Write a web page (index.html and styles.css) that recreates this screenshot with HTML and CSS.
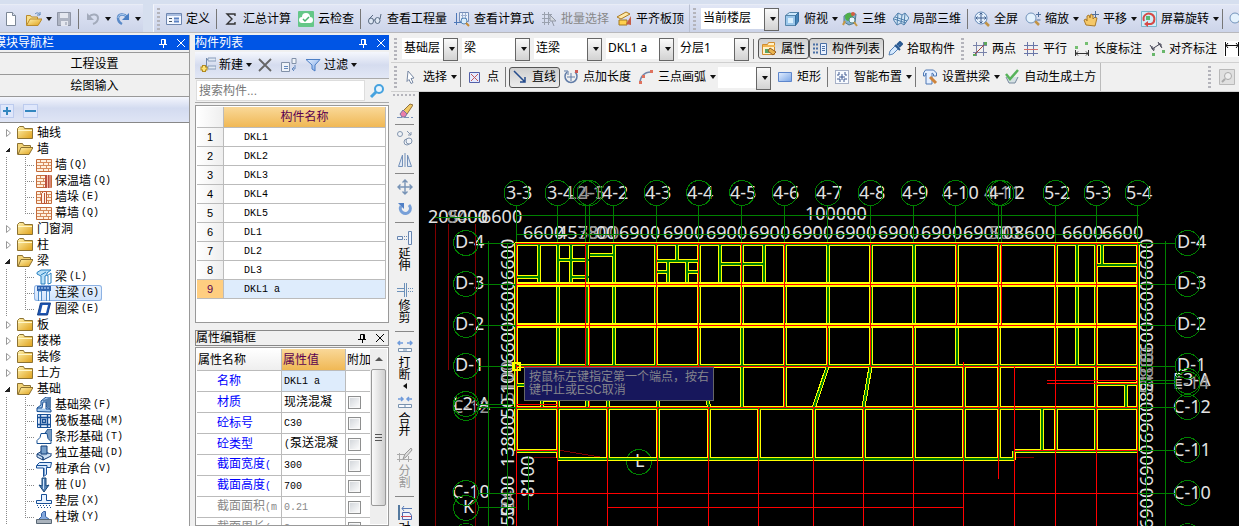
FILE: index.html
```html
<!DOCTYPE html>
<html lang="zh-CN">
<head>
<meta charset="utf-8">
<title>绘图输入</title>
<link rel="stylesheet" href="styles.css">
</head>
<body>
<svg class="defs" aria-hidden="true">
  <defs>
    <linearGradient id="gold" x1="0" y1="0" x2="1" y2="1"><stop offset="0" stop-color="#fff3b0"/><stop offset="1" stop-color="#dfa018"/></linearGradient>
    <linearGradient id="blue" x1="0" y1="0" x2="1" y2="1"><stop offset="0" stop-color="#e4efff"/><stop offset="1" stop-color="#78a4e6"/></linearGradient>
  </defs>
  <symbol id="doc" viewBox="0 0 16 16"><path d="M3.5 1.500h6l3 3v10h-9z" fill="#fff" stroke="#7c8796"/><path d="M9.500 1.500v3h3" fill="#dde5f0" stroke="#7c8796"/></symbol>
  <symbol id="open" viewBox="0 0 16 16"><path d="M.5 14V4.500h4l1 1.500h6v3" fill="#f8df8a" stroke="#b98a2c"/><path d="M.5 14.500 4 8h12l-4 6.500z" fill="url(#gold)" stroke="#b98a2c"/><path d="M9 3c2-2 4-1 5 1m0-3v3h-3" fill="none" stroke="#5c86b8"/></symbol>
  <symbol id="save" viewBox="0 0 16 16"><path d="M1.500 1.500h13v13h-13z" fill="#aeb4c2" stroke="#8e95a5"/><path d="M4 2h8v5H4zM5 10h7v5H5z" fill="#e4e7ef"/><path d="M10 11v3" stroke="#8e95a5"/></symbol>
  <symbol id="undo" viewBox="0 0 16 16"><path d="M4 6c3-4 9-3 9 1 0 3-2 5-5 6" fill="none" stroke="#a3abbb" stroke-width="2"/><path d="M2 2v7h7z" fill="#a3abbb"/></symbol>
  <symbol id="redo" viewBox="0 0 16 16"><path d="M12 6C9 2 3 3 3 7c0 3 2 5 4 6" fill="none" stroke="#5a8ac8" stroke-width="2.500"/><path d="M12 6C9 2 3 3 3 7" fill="none" stroke="#b2d1f3"/><path d="M14 2v7H7z" fill="#4a7fc4"/></symbol>
  <symbol id="define" viewBox="0 0 16 16"><path d="M.5 2.500h15v11H.5z" fill="#f3f7ff" stroke="#6e86b0"/><path d="M1 3h14v2H1z" fill="#a9bddf"/><path d="M3 7.500h3m-3 3h3" stroke="#456"/><path d="M8 7.500h5m-5 3h5" stroke="#5c83c5" stroke-width="2"/></symbol>
  <symbol id="sigma" viewBox="0 0 16 16"><path d="M12 5V3H4l5 5-5 5h8v-2" fill="none" stroke="#333" stroke-width="1.400"/></symbol>
  <symbol id="cloud" viewBox="0 0 16 16"><rect width="16" height="16" rx="1" fill="#65c788"/><path d="M4 12a3 3 0 0 1 0-6 4 4 0 0 1 8 0 3 3 0 0 1 0 6z" fill="#fff"/><path d="m5 8 2 2 4-4" fill="none" stroke="#48b46e" stroke-width="1.500"/></symbol>
  <symbol id="glasses" viewBox="0 0 16 16"><g fill="#dfe8f4" stroke="#596b83"><ellipse cx="4" cy="10" rx="2.500" ry="3"/><ellipse cx="10.500" cy="9.500" rx="2.500" ry="3"/><path d="M6.500 9h1.500M2 8l4-4M13 8l1-5" fill="none"/></g></symbol>
  <symbol id="formula" viewBox="0 0 16 16"><path d="M5.500 1.500h9v9h-9z" fill="#eaf1fb" stroke="#7790ba"/><path d="M7 4.500h6m-6 3h6M8.500 2v8m3-8v8" stroke="#9db0d0"/><path d="M2.500 2v12M0 11.500h7" stroke="#4d78b8"/><circle cx="10" cy="10" r="3" fill="#d9ecfb" stroke="#5586b6"/><path d="m12 12 3 3" stroke="#c68b35" stroke-width="2"/></symbol>
  <symbol id="batch" viewBox="0 0 16 16"><path d="M1 3.500h10M1 7.500h8M1 11.500h8M3.500 1v13M7.500 1v13" stroke="#9aa1ae"/><path d="m9 4 6 6H9z" fill="#d5d9e0" stroke="#9198a5"/><path d="m11 10 2 5" stroke="#9198a5"/></symbol>
  <symbol id="slab" viewBox="0 0 16 16"><path d="m1 6 9-5 4 2-9 5z" fill="#ffe9a6" stroke="#ad7b20"/><path d="M3 9h8v5H3z" fill="#ffd04e" stroke="#a37821"/><path d="m10 13 5-8v9z" fill="#c65d45"/></symbol>
  <symbol id="cube" viewBox="0 0 16 16"><path d="m1.500 4.500 4-3h9l-3 3z" fill="#cce8fc" stroke="#5685aa"/><path d="M1.500 4.500h10v10h-10z" fill="#9bc7eb" stroke="#5685aa"/><path d="m11.500 4.500 3-3v9l-3 4z" fill="#4584b7" stroke="#356c9d"/><path d="M4 7h5v5H4z" fill="#d9effd"/></symbol>
  <symbol id="orbit" viewBox="0 0 16 16"><path d="m2 5 5-3 7 1-1 9-6 2-5-3z" fill="#7eaed0" stroke="#567b8d"/><circle cx="7" cy="6" r="4" fill="#4faf48"/><circle cx="10" cy="9" r="3" fill="#e7f7fb" stroke="#57868d"/><path d="m12 11 3 4M3 10l-2 4" stroke="#c69943" stroke-width="2"/><circle cx="11" cy="3" r="2" fill="#d45d40"/></symbol>
  <symbol id="part3d" viewBox="0 0 16 16"><path d="m0 8 5-6 4 2 3-2 4 5-5 7-3-2-4 2z" fill="#d2e6f6" stroke="#5281ad"/><path d="m5 2-1 12M9 4 8 12m4-10-1 12M2 6l12 4M1 8l12 4" fill="none" stroke="#5281ad"/></symbol>
  <symbol id="full" viewBox="0 0 16 16"><path d="m11 11 4 4" stroke="#c29344" stroke-width="2.500"/><circle cx="7" cy="7" r="6" fill="#e4f0fd" stroke="#6286b4"/><path d="M7 2v10M2 7h10M5.500 3.500 7 2l1.500 1.500M5.500 10.500 7 12l1.500-1.500M3.500 5.500 2 7l1.500 1.500M10.500 5.500 12 7l-1.500 1.500" fill="none" stroke="#405f8e"/></symbol>
  <symbol id="zoomer" viewBox="0 0 16 16"><path d="m10 10 4 4" stroke="#c29344" stroke-width="2.500"/><circle cx="6" cy="7" r="5" fill="#e4f2fd" stroke="#7394bb"/><path d="M11 3.500h5M13.500 1v5m-2 3h4" stroke="#51719d"/></symbol>
  <symbol id="hand" viewBox="0 0 16 16"><path d="M3 14 1 9l2-1 1 2V5l2-1 1 3 1-4 2 1v4l2-2 2 1-2 8z" fill="#f5c868" stroke="#aa7a2a"/><path d="M12.500 0v7M9 3.500h7" stroke="#52709a"/></symbol>
  <symbol id="spin" viewBox="0 0 16 16"><path d="M.5.5h15v15H.5z" fill="#cfeef8" stroke="#79b6cd"/><path d="M3 10c-2-5 3-9 7-7 5 2 4 9 0 10H5" fill="none" stroke="#d64a47" stroke-width="2"/><path d="m7 10-4 3 4 3z" fill="#d64a47"/><path d="M5 5h4v4H5z" fill="#5bb773"/></symbol>
  <symbol id="props" viewBox="0 0 16 16"><path d="M1.500 3.500h5l1-2h6v12h-12z" fill="#fff1c8" stroke="#cf8d30"/><path d="M2 4h12v2H2z" fill="#f3b64f"/><path d="M4 8h7v4H4z" fill="#5aa766"/><path d="m9 7 6 4-3 3-5-4z" fill="#eab44f" stroke="#955f25"/></symbol>
  <symbol id="list" viewBox="0 0 16 16"><path d="M8.500 2.500h6v11h-6z" fill="#e8f1ff" stroke="#496fa5"/><path d="M10 5.500h3m-3 2h3m-3 2h3" stroke="#496fa5"/><path d="M1 3.500h2m1 0h2m-5 4h2m1 0h2m-5 4h2m1 0h2" stroke="#496fa5" stroke-width="2"/></symbol>
  <symbol id="pick" viewBox="0 0 16 16"><path d="m2 14 1-4 6-6 3 3-6 6z" fill="#d6eaff" stroke="#5783b7"/><path d="m8 4 5 5m-3-5 3-3 2 2-3 3" fill="#467bb8" stroke="#28588f" stroke-width="2"/></symbol>
  <symbol id="two" viewBox="0 0 16 16"><path d="M4.500 1v14m7-14v14M1 4.500h14M1 11.500h14" stroke="#7882aa"/><path d="m2 14 12-12" stroke="#a5443d"/><path d="M1 13h3v2H1zm11-12h3v3h-3z" fill="#5da75b"/></symbol>
  <symbol id="para" viewBox="0 0 16 16"><path d="M4.500 1v14m6-14v14M1 4.500h14" stroke="#6976a8"/><path d="M1 8.500h14" stroke="#d76b65"/><path d="M1 12.500h14" stroke="#6976a8"/></symbol>
  <symbol id="len" viewBox="0 0 16 16"><path d="M1.500 9v6m13-6v6M2 12.500h12M4 10.500l-2 2 2 2m8-4 2 2-2 2" fill="none" stroke="#333"/><path d="M1 5h3v3H1zm10-4h3v3h-3z" fill="#75bf71"/></symbol>
  <symbol id="align" viewBox="0 0 16 16"><path d="m1 4 4 6m4-9 4 6M3 8l8-5M3 5v3h3m3-5h3v3" fill="none" stroke="#445"/><path d="M3 12h3v3H3zm10-3h3v3h-3z" fill="#69b76b"/></symbol>
  <symbol id="dim" viewBox="0 0 16 16"><path fill="#fff" d="M0 0h16v16H0z"/><path d="M1.500 1v14m13-14v14M2 4.500h12M4 2 2 4.500 4 7m8-5 2 2.500L12 7" fill="none" stroke="#111"/></symbol>
  <symbol id="arrow" viewBox="0 0 16 16"><path d="m5 2 6 7-3 .5 2 4-2 1-2-4-2 2z" fill="#fff" stroke="#7788a4"/></symbol>
  <symbol id="point" viewBox="0 0 16 16"><path d="M2.500 3.500h10v10h-10z" fill="#e5eaff" stroke="#5360a8"/><path d="m4 5 7 7m0-7-7 7" stroke="#c35959"/></symbol>
  <symbol id="line" viewBox="0 0 16 16"><path d="m2 2 11 11M13 8v5H8" fill="none" stroke="#244b8c" stroke-width="1.500"/></symbol>
  <symbol id="addlen" viewBox="0 0 16 16"><path d="M4 3a6 6 0 1 0 8 0" fill="none" stroke="#617ca7" stroke-width="1.500"/><path d="M8 4v8M4 8h8M1 2h4v4" fill="none" stroke="#617ca7"/><path d="M12 1h3v3h-3z" fill="#cd5b55"/></symbol>
  <symbol id="arc" viewBox="0 0 16 16"><path d="M2 14C2 8 6 3 13 3" fill="none" stroke="#7387a9" stroke-width="1.500"/><path d="M1 12h3v3H1zm3-6h3v3H4zm8-5h3v3h-3z" fill="#df725e"/></symbol>
  <symbol id="rect" viewBox="0 0 16 16"><path d="M1.500 3.500h13v9h-13z" fill="url(#blue)" stroke="#5d86cc"/></symbol>
  <symbol id="smart" viewBox="0 0 16 16"><path d="M1.500 1.500h13v13h-13z" fill="#f8fbff" stroke="#5a6d96" stroke-dasharray="1 1"/><path d="M5 3v3H3m8-3v3h2M3 10h3v3m7-3h-3v3M8 5v6M5 8h6" fill="none" stroke="#405b91"/></symbol>
  <symbol id="arch" viewBox="0 0 16 16"><path d="M1.500 7V4l2-3h8l3 3v3h-3V5L10 4v11H4V4L3 7z" fill="#e4efff" stroke="#4e79b5"/><path d="m8 8 6 6" stroke="#ce843c" stroke-width="3"/></symbol>
  <symbol id="earth" viewBox="0 0 16 16"><path d="m2 8 3 6h6l3-6" fill="#d5e0e3" stroke="#75889c"/><path d="m2 5 4 5 8-9" fill="none" stroke="#58b35b" stroke-width="2.500"/></symbol>
  <symbol id="find" viewBox="0 0 16 16"><path d="M.5.5h15v15H.5z" fill="#e0e0e0" stroke="#b9b9b9"/><circle cx="9" cy="7" r="3.500" fill="#eee" stroke="#aaa"/><path d="m6 10-3 3" stroke="#aaa" stroke-width="2"/></symbol>
  <symbol id="new" viewBox="0 0 16 16"><path d="M6.500 1v11M7 2.500h9M7 10.500h9" stroke="#7189ad"/><path d="M8 1h8v3H8zm0 8h8v3H8z" fill="#e2eaf5" stroke="#889cba"/><path d="M4 8v7M.5 11.500h7" stroke="#b18a21" stroke-width="4"/><path d="M4 9v5M1.500 11.500h5" stroke="#ffe477" stroke-width="2"/></symbol>
  <symbol id="del" viewBox="0 0 16 16"><path d="m2 2 12 12M14 2 2 14" stroke="#666" stroke-width="1.800"/></symbol>
  <symbol id="copy" viewBox="0 0 16 16"><path d="M.5 5.500h8v9h-8zM11 1.500h4v5h-4z" fill="#eef2f8" stroke="#8291a8"/><path d="M3 9.500h4m-4 2h4M14 8v4h-3m2-2-2 2 2 2" fill="none" stroke="#6488bc"/></symbol>
  <symbol id="filter" viewBox="0 0 16 16"><path d="M1 2.500h14L10 8v6l-3-2V8z" fill="url(#blue)" stroke="#4d7fc5"/></symbol>
  <symbol id="search" viewBox="0 0 16 16"><circle cx="10" cy="6" r="4" fill="#e7f5ff" stroke="#46a2df" stroke-width="2"/><path d="m7 9-5 5" stroke="#46a2df" stroke-width="3"/></symbol>
  <symbol id="pin" viewBox="0 0 10 10"><path d="M3.500 6V1.500h4V6M6.500 1v5M1 6.500h8M5.500 7v3" fill="none" stroke="currentColor"/></symbol>
  <symbol id="close" viewBox="0 0 10 10"><path d="m1 1 8 8m0-8L1 9" stroke="currentColor"/></symbol>
  <symbol id="twist" viewBox="0 0 8 8"><path d="M1.500.500v7L5.500 4z" fill="#fff" stroke="#999"/></symbol>
  <symbol id="folder" viewBox="0 0 16 16"><path d="M.5 13.500v-10l2-2h4l1 2h8v10z" fill="url(#gold)" stroke="#8c7232"/><path d="M1 5.500h14" stroke="#fff6c8"/></symbol>
  <symbol id="folder-open" viewBox="0 0 16 16"><path d="M.5 13.500v-11h5l1 2h7v3" fill="#f3d478" stroke="#8c7232"/><path d="m1 13.500 3-7h12l-4 7z" fill="url(#gold)" stroke="#8c7232"/></symbol>
  <symbol id="brick" viewBox="0 0 16 16"><path d="M.5 2.500h15v12H.5z" fill="#fff0df" stroke="#c36b3a"/><path d="M1 5.500h14M1 8.500h14M1 11.500h14M4.500 3v2m6-2v2m-3 1v2m5-2v2m-8 1v2m6-2v2m-3 1v2m5-2v2" stroke="#d58a5c"/></symbol>
  <symbol id="warm" viewBox="0 0 16 16"><use href="#brick"/><path d="M9 2h6v13H9z" fill="#b94f42"/><path d="M11.500 2v13M14 2v13" stroke="#f5c1a9"/></symbol>
  <symbol id="pier" viewBox="0 0 16 16"><use href="#brick"/><path d="m5.500 4.500 2-2h3v12h-5zM8.500 4v10" fill="#fff1e6" stroke="#bd5733"/></symbol>
  <symbol id="beam" viewBox="0 0 16 16"><path d="M1 3.500 5 1h10l-4 3v2l-2 1v8H5V7L1 5z" fill="#b9e0f7" stroke="#267fc0"/><path d="m5 6 5-3m1 4 4-3v10l-3 1V7" fill="none" stroke="#267fc0"/></symbol>
  <symbol id="link" viewBox="0 0 16 16"><path d="M1 1h14v5H1z" fill="#2d61ae"/><path d="M2 3h12" stroke="#cee5ff" stroke-dasharray="2 1"/><path d="M2.500 6h3v10h-3zm8 0h3v10h-3z" fill="#eaf5ff" stroke="#4e8bca"/></symbol>
  <symbol id="ring" viewBox="0 0 16 16"><path d="M4.500 2h10l-3 12h-10z" fill="#1d55b2" stroke="#123f8a"/><path d="M6.500 4h5.500l-2 8H4.500z" fill="#fff"/></symbol>
  <symbol id="fbeam" viewBox="0 0 16 16"><path d="M1 14.500V11l4-3V4l5-4h5l-5 5v4l5 4v2z" fill="#a9cdf0" stroke="#164d91"/><path d="M5 4h5v5l5 3V0z" fill="#557fae"/><path d="M1 11h5l1-6h3v7h4" fill="#fff" stroke="#164d91"/></symbol>
  <symbol id="raft" viewBox="0 0 16 16"><path d="M1.500 1.500h13v13h-13z" fill="#e1ecfb" stroke="#174f96"/><path d="M4.500 1v14m7-14v14M1 4.500h14M1 11.500h14M6.500 6.500h3v3h-3z" fill="none" stroke="#174f96" stroke-width="1.400"/></symbol>
  <symbol id="strip" viewBox="0 0 16 16"><path d="M9 4 12 0h4v11l-3 3z" fill="#799abf" stroke="#174f91"/><path d="M1 14.500v-3l3-3 1-4h6l1 5 3 3v2z" fill="#fff" stroke="#174f91"/></symbol>
  <symbol id="isolated" viewBox="0 0 16 16"><path d="m1 9 5-3 9 3-8 6z" fill="#b6cde6" stroke="#153f78"/><path d="M5 1h6v8H5z" fill="#779fca" stroke="#153f78"/><path d="M1 9v3l6 3v-3zM7 12v3l8-4V8" fill="#d2e2f4" stroke="#153f78"/></symbol>
  <symbol id="cap" viewBox="0 0 16 16"><path d="m.5 4.500 3-3h12l-1 5h-4v7l-3 2V7h-7z" fill="#dcecff" stroke="#174f96"/><path d="M1 4.500h10v2M8 7v7" fill="none" stroke="#174f96"/></symbol>
  <symbol id="pile" viewBox="0 0 16 16"><path d="M6 1h4v8l3-1-5 7-5-7 3 1z" fill="#5682b4" stroke="#174778"/><path d="M7.500 2v10" stroke="#d1e8ff"/></symbol>
  <symbol id="cushion" viewBox="0 0 16 16"><path d="M5.500 1.500h5v6h5v3H.5v-3h5z" fill="#e9f3ff" stroke="#174f96"/><path d="M1 12.500h14M2 14.500h13" stroke="#174f96" stroke-dasharray="1 2"/></symbol>
  <symbol id="block" viewBox="0 0 16 16"><path d="M5.500 7.500v-3l2-2h2v5l4 3H2.500z" fill="#83a7db" stroke="#345fa4"/><path d="M.5 10.500h15v4H.5z" fill="#aab3bd" stroke="#596774"/></symbol>
  <symbol id="erase" viewBox="0 0 16 16"><path d="m6 8 7-7 3 1-6 9z" fill="#f1ca66" stroke="#91713c"/><path d="m3 11 3-4 4 4-2 3H5z" fill="#e97eaa" stroke="#74739e"/><path d="M0 14.500h16" stroke="#7992b8" stroke-dasharray="5 2"/></symbol>
  <symbol id="clone" viewBox="0 0 16 16"><g fill="#f1f4f8" stroke="#8395ae"><circle cx="3" cy="4" r="2.500"/><circle cx="10" cy="12" r="3"/><circle cx="12" cy="11" r="3"/><path d="m10 1 4 4m0-3v3h-3" fill="none"/></g></symbol>
  <symbol id="mirror" viewBox="0 0 16 16"><path d="M1.500 14.500h4V3zM10.500 3v11.500h4zM8 1v14" fill="#e1eaf6" stroke="#7390b9"/></symbol>
  <symbol id="move" viewBox="0 0 16 16"><path d="M8 1v14M1 8h14M5.500 3.500 8 1l2.500 2.500m-5 9L8 15l2.500-2.500m-7-7L1 8l2.500 2.500m9-5L15 8l-2.500 2.500" fill="none" stroke="#7793b6" stroke-width="1.400"/></symbol>
  <symbol id="rotate" viewBox="0 0 16 16"><path d="M4 5a5 5 0 1 0 8-1" fill="none" stroke="#78a0d8" stroke-width="3"/><path d="M1 2h6v6z" fill="#507fc5"/></symbol>
  <symbol id="extend" viewBox="0 0 16 16"><path d="M11.500 1.500h3v13h-3zM.5 6.500h5v3h-5z" fill="#edf4ff" stroke="#6785af"/><path d="M7 6.500h4M7 9.500h4" stroke="#6785af" stroke-dasharray="1 1"/></symbol>
  <symbol id="trim" viewBox="0 0 16 16"><path d="M7.500 1v14m2-14v14M0 6.500h7M0 9.500h7" stroke="#6d91b9"/><path d="M11 6.500h5m-5 3h5" stroke="#6d91b9" stroke-dasharray="1 1"/></symbol>
  <symbol id="break" viewBox="0 0 16 16"><path d="M6 4H1m2-2L1 4l2 2m7-2h5m-2-2 2 2-2 2" fill="none" stroke="#6f9bdb" stroke-width="1.500"/><path d="M1.500 9.500h13v3h-13zM7 9v4m2-4v4" fill="#f7faff" stroke="#7992ae"/></symbol>
  <symbol id="merge" viewBox="0 0 16 16"><path d="M1 4h5M4 2l2 2-2 2m11-2h-5m2-2-2 2 2 2" fill="none" stroke="#6f9bdb" stroke-width="1.500"/><path d="M1.500 9.500h13v3h-13zM8 9v4" fill="#f7faff" stroke="#7992ae"/></symbol>
  <symbol id="split" viewBox="0 0 16 16"><path d="M2.500 6v9m9-6v6M0 7.500h8M0 12.500h15" stroke="#aaa"/><path d="m6 12 2-5 6-6 1 2-6 7z" fill="#ddd" stroke="#999"/></symbol>
  <symbol id="snap" viewBox="0 0 16 16"><path d="M2 1v15" stroke="#54799f" stroke-width="2"/><path d="M5 4.500h10M7 2 5 4.500 7 7" fill="none" stroke="#587bb5"/><path d="M5.500 8.500h7l2 3v4h-9z" fill="#eef3ff" stroke="#4d65ad"/><path d="M4 12.500h10" stroke="#c84d5b"/></symbol>
</svg>

<header class="topbar">
  <div class="group file-group">
    <button class="tb"><svg><use href="#doc"/></svg></button>
    <button class="tb drop"><svg><use href="#open"/></svg></button>
    <button class="tb"><svg><use href="#save"/></svg></button>
    <i class="sep"></i>
    <button class="tb drop"><svg><use href="#undo"/></svg></button>
    <button class="tb drop"><svg><use href="#redo"/></svg></button>
  </div>
  <div class="group calc-group">
    <i class="grip snug"></i>
    <button class="tb"><svg><use href="#define"/></svg>定义</button><i class="sep"></i>
    <button class="tb"><svg><use href="#sigma"/></svg>汇总计算</button>
    <button class="tb"><svg><use href="#cloud"/></svg>云检查</button><i class="sep"></i>
    <button class="tb"><svg><use href="#glasses"/></svg>查看工程量</button>
    <button class="tb"><svg><use href="#formula"/></svg>查看计算式</button>
    <button class="tb" disabled><svg><use href="#batch"/></svg>批量选择</button>
    <button class="tb"><svg><use href="#slab"/></svg>平齐板顶</button>
  </div>
  <div class="group view-group">
    <i class="grip"></i>
    <span class="combo wide"><select aria-label="楼层范围"><option>当前楼层</option></select></span>
    <button class="tb drop"><svg><use href="#cube"/></svg>俯视</button>
    <button class="tb"><svg><use href="#orbit"/></svg>三维</button>
    <button class="tb"><svg><use href="#part3d"/></svg>局部三维</button><i class="sep"></i>
    <button class="tb"><svg><use href="#full"/></svg>全屏</button>
    <button class="tb drop"><svg><use href="#zoomer"/></svg>缩放</button>
    <button class="tb drop"><svg><use href="#hand"/></svg>平移</button>
    <button class="tb drop"><svg><use href="#spin"/></svg>屏幕旋转</button><i class="sep"></i>
    <button class="tb"><svg><use href="#zoomer"/></svg></button>
  </div>
</header>

<div class="workspace">
  <nav class="navigator">
    <h2 class="caption clipped"><span>模块导航栏</span><svg><use href="#pin"/></svg><svg><use href="#close"/></svg></h2>
    <button class="section">工程设置</button>
    <button class="section">绘图输入</button>
    <div class="expand-bar"><button class="expand plus" aria-label="展开"></button><button class="expand" aria-label="折叠"></button></div>
    <ul class="tree">
      <li><b class="node"><svg class="twist"><use href="#twist"/></svg><svg><use href="#folder"/></svg>轴线</b></li>
      <li><b class="node opened"><svg><use href="#folder-open"/></svg>墙</b>
        <ul>
          <li><span class="leaf"><svg><use href="#brick"/></svg>墙<code>(Q)</code></span></li>
          <li><span class="leaf"><svg><use href="#warm"/></svg>保温墙<code>(Q)</code></span></li>
          <li><span class="leaf"><svg><use href="#pier"/></svg>墙垛<code>(E)</code></span></li>
          <li><span class="leaf"><svg><use href="#brick"/></svg>幕墙<code>(Q)</code></span></li>
        </ul></li>
      <li><b class="node"><svg class="twist"><use href="#twist"/></svg><svg><use href="#folder"/></svg>门窗洞</b></li>
      <li><b class="node"><svg class="twist"><use href="#twist"/></svg><svg><use href="#folder"/></svg>柱</b></li>
      <li><b class="node opened"><svg><use href="#folder-open"/></svg>梁</b>
        <ul>
          <li><span class="leaf"><svg><use href="#beam"/></svg>梁<code>(L)</code></span></li>
          <li><span class="leaf current"><svg><use href="#link"/></svg>连梁<code>(G)</code></span></li>
          <li><span class="leaf"><svg><use href="#ring"/></svg>圈梁<code>(E)</code></span></li>
        </ul></li>
      <li><b class="node"><svg class="twist"><use href="#twist"/></svg><svg><use href="#folder"/></svg>板</b></li>
      <li><b class="node"><svg class="twist"><use href="#twist"/></svg><svg><use href="#folder"/></svg>楼梯</b></li>
      <li><b class="node"><svg class="twist"><use href="#twist"/></svg><svg><use href="#folder"/></svg>装修</b></li>
      <li><b class="node"><svg class="twist"><use href="#twist"/></svg><svg><use href="#folder"/></svg>土方</b></li>
      <li><b class="node opened"><svg><use href="#folder-open"/></svg>基础</b>
        <ul>
          <li><span class="leaf"><svg><use href="#fbeam"/></svg>基础梁<code>(F)</code></span></li>
          <li><span class="leaf"><svg><use href="#raft"/></svg>筏板基础<code>(M)</code></span></li>
          <li><span class="leaf"><svg><use href="#strip"/></svg>条形基础<code>(T)</code></span></li>
          <li><span class="leaf"><svg><use href="#isolated"/></svg>独立基础<code>(D)</code></span></li>
          <li><span class="leaf"><svg><use href="#cap"/></svg>桩承台<code>(V)</code></span></li>
          <li><span class="leaf"><svg><use href="#pile"/></svg>桩<code>(U)</code></span></li>
          <li><span class="leaf"><svg><use href="#cushion"/></svg>垫层<code>(X)</code></span></li>
          <li><span class="leaf"><svg><use href="#block"/></svg>柱墩<code>(Y)</code></span></li>
        </ul></li>
    </ul>
  </nav>

  <aside class="panels">
    <h2 class="caption"><span>构件列表</span><svg><use href="#pin"/></svg><svg><use href="#close"/></svg></h2>
    <div class="list-tools">
      <button class="tb drop"><svg><use href="#new"/></svg>新建</button>
      <button class="tb"><svg><use href="#del"/></svg></button>
      <button class="tb"><svg><use href="#copy"/></svg></button>
      <button class="tb drop"><svg><use href="#filter"/></svg>过滤</button>
    </div>
    <div class="search"><input type="text" placeholder="搜索构件..." aria-label="搜索构件"><button aria-label="搜索"><svg><use href="#search"/></svg></button></div>
    <div class="frame list-frame">
      <table class="parts">
        <thead><tr><th></th><th>构件名称</th></tr></thead>
        <tbody>
          <tr><th>1</th><td>DKL1</td></tr><tr><th>2</th><td>DKL2</td></tr><tr><th>3</th><td>DKL3</td></tr>
          <tr><th>4</th><td>DKL4</td></tr><tr><th>5</th><td>DKL5</td></tr><tr><th>6</th><td>DL1</td></tr>
          <tr><th>7</th><td>DL2</td></tr><tr><th>8</th><td>DL3</td></tr><tr class="picked"><th>9</th><td>DKL1 a</td></tr>
        </tbody>
      </table>
    </div>
    <h2 class="caption plain"><span>属性编辑框</span><svg><use href="#pin"/></svg><svg><use href="#close"/></svg></h2>
    <div class="frame prop-frame">
      <table class="props">
        <thead><tr><th>属性名称</th><th class="hot">属性值</th><th>附加</th></tr></thead>
        <tbody>
          <tr><th>名称</th><td class="lit"><code>DKL1 a</code></td><td></td></tr>
          <tr><th>材质</th><td>现浇混凝</td><td><input type="checkbox" aria-label="附加材质"></td></tr>
          <tr><th>砼标号</th><td><code>C30</code></td><td><input type="checkbox" aria-label="附加砼标号"></td></tr>
          <tr><th>砼类型</th><td><code>(</code>泵送混凝</td><td><input type="checkbox" aria-label="附加砼类型"></td></tr>
          <tr><th>截面宽度<code>(</code></th><td><code>300</code></td><td><input type="checkbox" aria-label="附加截面宽度"></td></tr>
          <tr><th>截面高度<code>(</code></th><td><code>700</code></td><td><input type="checkbox" aria-label="附加截面高度"></td></tr>
          <tr class="off"><th>截面面积<code>(m</code></th><td><code>0.21</code></td><td><input type="checkbox" aria-label="附加截面面积"></td></tr>
          <tr class="off"><th>截面周长<code>(m</code></th><td><code>2</code></td><td><input type="checkbox" aria-label="附加截面周长"></td></tr>
        </tbody>
      </table>
      <div class="scroll"><i class="up"></i><i class="thumb"></i></div>
    </div>
  </aside>

  <main class="stage">
    <div class="bar">
      <i class="grip"></i>
      <div class="combos">
        <span class="combo short"><select aria-label="楼层"><option>基础层</option></select></span>
        <span class="combo"><select aria-label="构件大类"><option>梁</option></select></span>
        <span class="combo"><select aria-label="构件类型"><option>连梁</option></select></span>
        <span class="combo"><select aria-label="构件"><option>DKL1 a</option></select></span>
        <span class="combo layer"><select aria-label="分层"><option>分层1</option></select></span>
      </div>
      <i class="sep"></i>
      <button class="tb pressed"><svg><use href="#props"/></svg>属性</button>
      <button class="tb pressed"><svg><use href="#list"/></svg>构件列表</button>
      <button class="tb"><svg><use href="#pick"/></svg>拾取构件</button>
      <i class="grip edge"></i>
      <button class="tb"><svg><use href="#two"/></svg>两点</button>
      <button class="tb"><svg><use href="#para"/></svg>平行</button>
      <button class="tb"><svg><use href="#len"/></svg>长度标注</button>
      <button class="tb"><svg><use href="#align"/></svg>对齐标注</button>
      <button class="tb"><svg><use href="#dim"/></svg></button>
    </div>
    <div class="bar">
      <div class="group draw-group">
        <i class="grip snug"></i>
        <button class="tb drop"><svg><use href="#arrow"/></svg>选择</button><i class="sep"></i>
        <button class="tb"><svg><use href="#point"/></svg>点</button><i class="sep"></i>
        <button class="tb pressed"><svg><use href="#line"/></svg>直线</button>
        <button class="tb"><svg><use href="#addlen"/></svg>点加长度</button>
        <button class="tb drop"><svg><use href="#arc"/></svg>三点画弧</button>
        <span class="combo radius"><select aria-label="半径"><option></option></select></span>
        <button class="tb"><svg><use href="#rect"/></svg>矩形</button><i class="sep"></i>
        <button class="tb drop"><svg><use href="#smart"/></svg>智能布置</button><i class="sep"></i>
        <button class="tb drop"><svg><use href="#arch"/></svg>设置拱梁</button>
        <button class="tb"><svg><use href="#earth"/></svg>自动生成土方</button>
      </div>
      <div class="group last"><i class="grip"></i><button class="tb"><svg><use href="#find"/></svg></button></div>
    </div>
    <div class="drawing">
      <div class="edit-tools">
        <i class="grip-h"></i>
        <button class="vt"><svg><use href="#erase"/></svg></button><hr>
        <button class="vt"><svg><use href="#clone"/></svg></button>
        <button class="vt"><svg><use href="#mirror"/></svg></button><hr>
        <button class="vt"><svg><use href="#move"/></svg></button>
        <button class="vt"><svg><use href="#rotate"/></svg></button><hr>
        <button class="vt long"><svg><use href="#extend"/></svg><span>延伸</span></button>
        <button class="vt long"><svg><use href="#trim"/></svg><span>修剪</span></button><hr>
        <button class="vt long more"><svg><use href="#break"/></svg><span>打断</span></button>
        <button class="vt long"><svg><use href="#merge"/></svg><span>合并</span></button>
        <button class="vt long" disabled><svg><use href="#split"/></svg><span>分割</span></button><hr>
        <button class="vt long"><svg><use href="#snap"/></svg><span>对齐</span></button>
      </div>
      <div class="canvas">
        <svg class="plan" viewBox="419 92 820 434" preserveAspectRatio="xMinYMin slice">
          <defs>
            <path id="walls" d="M515 244H1140M514 285H1138M514 326H1138M516 366H1138M514 408H1138M516 451H558M557 459H1015M1014 451H1138M1014 451V460
              M516 243V451M558 243V458M587 243V407M614 243V366M656 243V366M699 243V366M742 243V407M785 243V407M828 243V366M871 243V366M914 243V366M957 243V366M999 243V458M1056 243V366M1077 243V366M1096 243V450M1138 243V451
              M539 243V284M516 277H538M571 243V284M557 260H589M570 277H589M590 255H613M677 243V261M656 261H698M668 261V284M656 272H668M687 261V284M687 272H698M720 243V284M764 243V284M720 264H764M1102 243V265M1096 265H1137
              M827.500 367 814 407M870.500 367 863.500 407M914 366V458M964 366V458M542 398V407M541 400H558M516 385H540M608 397V458M658 399V458M707 397 709 407V458M759 407V458M814 407V458M864 407V458M1042 407V450M1056 407V450M1096 384H1137M1126 383V407"/>
            <path id="heads" d="M516.500 205V243M557.500 205V243M585.500 205V243M589.500 205V243M613.500 205V243M656.500 205V243M698.500 205V243M741.500 205V243M784.500 205V243M827.500 205V243M870.500 205V243M913.500 205V243M955.500 205V243M998.500 205V243M1001.500 205V243M1055.500 205V243M1096.500 205V243M1137.500 205V243M435 217.500H482M516 215.500H1139M516 234.500H1139M507.500 243V526M488.500 241V526M1146.500 243V526M1165.500 241V526M478 243.500H516M478 284.500H516M478 325.500H516M478 366.500H516M478 404.500H516M478 407.500H516M478 493.500H516M478 507.500H516M1138 243.500H1175M1138 284.500H1175M1138 325.500H1175M1138 366.500H1175M1138 380.500H1175M1138 383.500H1175M1138 407.500H1175M1138 450.500H1175M1138 493.500H1175M528.500 456V510"/>
          </defs>
          <g class="bright">
            <text x="506" y="199">3-3</text><text x="547" y="199">3-4</text><text class="dim" x="567" y="199">L2-1</text><text class="dim" x="579" y="199">4-5</text><text x="602" y="199">4-2</text><text x="645" y="199">4-3</text><text x="687" y="199">4-4</text><text x="730" y="199">4-5</text><text x="773" y="199">4-6</text><text x="816" y="199">4-7</text><text x="859" y="199">4-8</text><text x="902" y="199">4-9</text><text x="942" y="199">4-10</text><text class="dim" x="984" y="199">4-11</text><text x="988" y="199">4-12</text><text x="1044" y="199">5-2</text><text x="1085" y="199">5-3</text><text x="1126" y="199">5-4</text>
            <text x="805" y="220">100000</text>
            <text x="428" y="223">205</text><text class="dim" x="447" y="223">8400</text><text x="457" y="223">000</text><text x="481" y="223">6600</text>
            <text x="523" y="239">6600</text><text x="557" y="239">4578</text><text class="dim" x="578" y="239">3800</text><text x="596" y="239">00</text><text x="619" y="239">6900</text><text x="663" y="239">6900</text><text x="706" y="239">6900</text><text x="749" y="239">6900</text><text x="792" y="239">6900</text><text x="835" y="239">6900</text><text x="878" y="239">6900</text><text x="921" y="239">6900</text><text x="963" y="239">6900</text><text class="dim" x="989" y="239">500</text><text x="1003" y="239">0</text><text x="1014" y="239">8600</text><text x="1062" y="239">6600</text><text x="1102" y="239">6600</text>
            <text x="455" y="248">D-4</text><text x="455" y="289">D-3</text><text x="455" y="330">D-2</text><text x="455" y="371">D-1</text><text x="453" y="410">L2-A</text><text class="dim" x="452" y="413">C-12</text><text x="452" y="498">C-10</text><text x="463" y="513">K</text><text x="635" y="467">L</text>
            <text x="1177" y="248">D-4</text><text x="1177" y="289">D-3</text><text x="1177" y="330">D-2</text><text x="1177" y="371">D-1</text><text x="1173" y="386">E3-A</text><text class="dim" x="1173" y="389">E-14</text><text x="1173" y="413">C-12</text><text x="1173" y="456">C-11</text><text x="1173" y="499">C-10</text>
            <text transform="translate(514 280) rotate(-90)">6600</text><text transform="translate(514 322) rotate(-90)">6600</text><text transform="translate(514 363) rotate(-90)">6600</text><text transform="translate(514 394) rotate(-90)">100</text><text class="dim" transform="translate(514 402) rotate(-90)">5100</text><text transform="translate(514 418) rotate(-90)">50</text><text transform="translate(514 467) rotate(-90)">13800</text><text transform="translate(514 517) rotate(-90)">5000</text><text class="dim" transform="translate(514 511) rotate(-90)">24</text><text transform="translate(514 536) rotate(-90)">650</text><text transform="translate(534 497) rotate(-90)">8100</text>
            <text transform="translate(1153 280) rotate(-90)">6600</text><text transform="translate(1153 322) rotate(-90)">6600</text><text transform="translate(1153 363) rotate(-90)">6600</text><text class="dim" transform="translate(1153 388) rotate(-90)">3800</text><text class="dim" transform="translate(1153 394) rotate(-90)">5100</text><text transform="translate(1153 402) rotate(-90)">88</text><text transform="translate(1153 443) rotate(-90)">6900</text><text transform="translate(1153 486) rotate(-90)">6900</text><text transform="translate(1153 529) rotate(-90)">6900</text>
          </g>
          <g class="maroon"><path d="M435.500 224V526M448.500 224V370M475.500 224V526M534 457.500H607M558 450 600 457M1014 457.500H1034"/></g>
          <use class="green-line" href="#heads"/>
          <g class="bubbles">
            <circle cx="516.500" cy="193" r="12.500"/><circle cx="557.500" cy="193" r="12.500"/><circle cx="585.500" cy="193" r="12.500"/><circle cx="589.500" cy="193" r="12.500"/><circle cx="613.500" cy="193" r="12.500"/><circle cx="656.500" cy="193" r="12.500"/><circle cx="699" cy="193" r="12.500"/><circle cx="742" cy="193" r="12.500"/><circle cx="784.500" cy="193" r="12.500"/><circle cx="827.500" cy="193" r="12.500"/><circle cx="870.500" cy="193" r="12.500"/><circle cx="913.500" cy="193" r="12.500"/><circle cx="955.500" cy="193" r="12.500"/><circle cx="998.500" cy="193" r="12.500"/><circle cx="1001.500" cy="193" r="12.500"/><circle cx="1055.500" cy="193" r="12.500"/><circle cx="1096.500" cy="193" r="12.500"/><circle cx="1137.500" cy="193" r="12.500"/>
            <circle cx="466" cy="243" r="12.500"/><circle cx="466" cy="284" r="12.500"/><circle cx="466" cy="325" r="12.500"/><circle cx="466" cy="366" r="12.500"/><circle cx="466" cy="404" r="12.500"/><circle cx="466" cy="408" r="12.500"/><circle cx="466" cy="493" r="12.500"/><circle cx="466" cy="508" r="12.500"/><circle cx="466" cy="536" r="12.500"/><circle cx="639" cy="462" r="12.500"/>
            <circle cx="1187.500" cy="243" r="12.500"/><circle cx="1187.500" cy="284" r="12.500"/><circle cx="1187.500" cy="325" r="12.500"/><circle cx="1187.500" cy="366" r="12.500"/><circle cx="1187.500" cy="381" r="12.500"/><circle cx="1187.500" cy="384" r="12.500"/><circle cx="1187.500" cy="407" r="12.500"/><circle cx="1187.500" cy="450" r="12.500"/><circle cx="1187.500" cy="493" r="12.500"/><circle cx="1187.500" cy="536" r="12.500"/>
          </g>
          <use class="wall-face" href="#walls"/>
          <use class="wall-core" href="#walls"/>
          <path class="slab-edge" d="M516 283H1137M516 286H1137M516 324H1137M516 327H1137M1096 383H1137"/>
          <path class="axis" d="M516 243.500H1137M516 284.500H1137M516 325.500H1137M516 366.500H1137M516 407.500H1137M516 404.500H557M516 450.500H557M1014 450.500H1137M516 493.500H1137M607 507.500H964M1047 380.500H1137M1047 383.500H1137
            M516.500 243V526M557.500 366V526M585.500 243V366M589.500 284V407M656.500 243V366M698.500 243V366M741.500 243V325M784.500 243V407M827.500 325V366M870.500 243V366M913.500 325V526M956.500 243V325M998.500 243V479M1001.500 243V326M1055.500 243V526M1096.500 243V526M1137.500 243V526M607.500 407V526M657.500 407V526M708.500 407V526M758.500 407V526M813.500 407V526M863.500 407V526M963.500 362V526M1014.500 366V526"/>
          <rect class="cursor" x="513" y="363" width="7" height="7"/>
        </svg>
        <div class="hint" role="tooltip">按鼠标左键指定第一个端点，按右键中止或ESC取消</div>
      </div>
    </div>
  </main>
</div>
</body>
</html>
```
FILE: styles.css
```css
* { box-sizing: border-box; }
body {
  margin: 0;
  height: 100vh;
  display: flex;
  flex-direction: column;
  overflow: hidden;
  background: #f0f0f0;
  color: #000;
  font: 12px/16px "Liberation Sans", "Noto Sans CJK SC", sans-serif;
}
button, input, select { font: inherit; color: inherit; margin: 0; }
button { border: 0; padding: 0; background: none; }
svg { width: 16px; height: 16px; flex: none; }
.defs { position: absolute; width: 0; height: 0; }
code { font: 10px/16px "Liberation Mono", monospace; white-space: pre; }

/* toolbars */
.topbar { display: flex; flex: none; height: 33px; padding-top: 4px; background: #d6dfef; border-bottom: 1px solid #b8b8bc; }
.group { display: flex; align-items: center; flex: none; }
.topbar .group { background: linear-gradient(#e1e6f5, #ccd4e9); border-top: 1px solid #e8ecf6; }
.file-group { width: 143px; }
.calc-group { width: 537px; margin-left: 10px; border-left: 1px solid #f4f6fb; border-right: 1px solid #b9c0d2; }
.topbar .view-group { flex: 1; overflow: hidden; }
.tb { display: flex; align-items: center; flex: none; gap: 4px; height: 20px; padding: 0 4px 0 3px; white-space: nowrap; }
.tb:disabled { color: #888; }
.drop { padding-right: 1px; }
.drop::after, .combo::after { content: ""; border: 3px solid transparent; border-top: 4px solid #111; border-bottom: 0; }
.sep { flex: none; width: 1px; height: 20px; margin: 0 3px 0 2px; background: #777; }
.grip { flex: none; width: 3px; height: 22px; margin: 0 5px 0 3px; background: repeating-linear-gradient(#b4b4bb 0 2px, transparent 2px 4px); }
.snug { margin-right: 3px; }
.pressed { height: 21px; padding: 0 3px 0 2px; border: 1px solid #555; border-radius: 3px; background: linear-gradient(#cfcfcf, #ececec); }
.bar { display: flex; align-items: center; flex: none; height: 29px; overflow: hidden; border-bottom: 1px solid #d0d0d0; }
.bar > .sep { margin: 0 4px; }
.edge { margin-left: 2px; }
.combos { display: flex; gap: 4px; }
.combo { position: relative; display: flex; flex: none; width: 68px; height: 21px; background: #fff; }
.short { width: 56px; }
.layer { width: 71px; }
.wide { width: 78px; margin-right: 2px; }
.radius { width: 53px; margin: 0 3px 0 1px; }
.combo select { width: 100%; border: 0; padding: 0 14px 1px 2px; background: none; appearance: none; outline: 0; font-family: "Noto Sans", "Noto Sans CJK SC", sans-serif; }
.combo::before { content: ""; position: absolute; right: 0; top: 0; width: 13px; height: 21px; border: 1px solid #666; background: linear-gradient(#fafafa, #d2d2d2); pointer-events: none; }
.combo::after { position: absolute; right: 3px; top: 9px; pointer-events: none; }
.draw-group { height: 28px; border-right: 1px solid #bbb; }
.last { margin-left: auto; }

/* docked panels */
.workspace { display: flex; flex: 1; min-height: 0; padding-top: 2px; }
.navigator { display: flex; flex-direction: column; flex: none; width: 190px; margin-right: 5px; border-right: 1px solid #999; }
.caption { display: flex; align-items: center; flex: none; gap: 8px; height: 15px; margin: 0 0 2px; padding-right: 3px; background: #0055e5; color: #fff; font-size: 12px; font-weight: 400; white-space: nowrap; }
.caption span { flex: 1; }
.caption svg { width: 10px; height: 10px; }
.clipped span { text-indent: -6px; overflow: hidden; }
.plain { height: 16px; margin-bottom: 1px; border: 1px solid #888; background: #f0f0f0; color: #000; }
.section { flex: none; height: 22px; border: solid #999; border-width: 1px 0 0; background: #f0f0f0; }
.expand-bar { display: flex; gap: 9px; flex: none; height: 27px; padding: 7px 0 0; border-top: 1px solid #999; border-bottom: 1px solid #888; background: linear-gradient(#f4f6fd, #d3dbf0 45%, #dfe5f5); }
.expand { width: 15px; height: 14px; border: 1px solid #bccbee; background: linear-gradient(#3387bf, #3387bf) center / 11px 2px no-repeat #dfe7fb; }
.expand.plus { width: 14px; background: linear-gradient(#3387bf, #3387bf) center / 8px 2px no-repeat, linear-gradient(#3387bf, #3387bf) center / 2px 8px no-repeat #dfe7fb; }
.tree, .tree ul { list-style: none; margin: 0; padding: 0; }
.tree { flex: 1; overflow: hidden; padding-top: 2px; background: #fff; }
.node { display: flex; gap: 4px; height: 16px; padding-left: 5px; align-items: center; font-weight: 400; }
.node .twist { width: 8px; height: 8px; }
.opened::before { content: ""; width: 5px; height: 5px; margin-right: 3px; background: linear-gradient(135deg, transparent 50%, #222 50%); }
.tree ul { padding-left: 25px; background: repeating-linear-gradient(#888 0 1px, transparent 1px 2px) 6px 0 / 1px 100% no-repeat; }
.tree ul li { display: flex; align-items: center; height: 16px; background: repeating-linear-gradient(#888 0 1px, transparent 1px 2px) 0 0 / 1px 100% no-repeat, repeating-linear-gradient(90deg, #888 0 1px, transparent 1px 2px) 0 8px / 10px 1px no-repeat; }
.tree ul li:last-child { background-size: 1px 8px, 10px 1px; }
.leaf { display: flex; align-items: center; gap: 3px; height: 16px; margin-left: 9px; padding: 0 3px 0 2px; border-radius: 3px; }
.leaf code { margin-left: -1px; }
.current { box-shadow: inset 0 0 0 1px #8db2e3; background: linear-gradient(#eaf3ff, #cfe2fb); }

.panels { display: flex; flex-direction: column; flex: none; width: 194px; margin-right: 2px; }
.list-tools { display: flex; align-items: center; flex: none; gap: 1px; height: 26px; padding-left: 2px; background: linear-gradient(#f5f7fd, #d5dcef 50%, #e2e7f5); }
.list-tools .tb { gap: 3px; }
.search { display: flex; flex: none; height: 25px; padding: 1px 0 1px 1px; margin-bottom: 2px; border: solid #aaa; border-width: 1px 0; }
.search input { flex: 1; min-width: 0; padding: 0 2px; border: 1px solid #ddd; background: #fff; }
.search input::placeholder { color: #777; }
.search button { width: 24px; display: grid; place-items: center; }
.frame { flex: none; border: 1px solid #999; background: #fff; }
.list-frame { height: 218px; padding: 1px; margin-bottom: 7px; }
table { border-collapse: separate; border-spacing: 0; table-layout: fixed; }
th, td { padding: 0; font-weight: 400; white-space: nowrap; overflow: hidden; border: solid #bbb; border-width: 0 1px 1px 0; }
.parts { width: 189px; }
.parts th:first-child { width: 27px; background: linear-gradient(90deg, #fff, #eee); font-family: "Liberation Sans", sans-serif; font-size: 11px; }
.parts thead th { height: 21px; color: #5a0050; }
.parts thead th:last-child { background: linear-gradient(#f9d898, #f0b855); }
.parts tbody tr { height: 19px; }
.parts td { padding: 2px 0 0 20px; font: 10px/16px "Liberation Mono", monospace; white-space: pre; }
.parts .picked td, .props .lit { background: #deecfc; }
.parts .picked th:first-child { background: #ffce80; color: #5a0050; }
.prop-frame { display: flex; flex: 1; padding: 1px; overflow: hidden; min-height: 0; }
.props { flex: none; width: 173px; align-self: flex-start; }
.props tr { height: 21px; }
.props th, .props td { text-align: left; line-height: 16px; }
.props thead th { height: 22px; padding-left: 1px; background: linear-gradient(#fff, #eee); }
.props thead .hot { background: linear-gradient(#f9d898, #f0b855); color: #5a0050; }
.props th:first-child { width: 85px; }
.props th:nth-child(2) { width: 64px; }
.props tbody th { padding-left: 20px; color: #00f; }
.props td { padding-left: 2px; }
.props td:last-child, .props th:last-child { border-right: 0; }
.props .off > * { color: #888; }
.props input { display: block; width: 13px; height: 13px; appearance: none; border: 1px solid #8e8f8f; background: linear-gradient(135deg, #cfd3d8, #fff); box-shadow: inset 0 0 0 1px #f8f8f8; }
.scroll { display: flex; flex-direction: column; align-items: center; flex: 1; background: #eee; }
.up { flex: none; margin: 8px 0; border: 4px solid transparent; border-bottom: 4px solid #555; border-top: 0; }
.thumb { flex: none; width: 15px; height: 137px; border: 1px solid #999; border-radius: 2px; background: repeating-linear-gradient(#555 0 1px, transparent 1px 3px) center / 7px 8px no-repeat, linear-gradient(90deg, #fafafa, #cfcfcf); }

/* drawing area */
.stage { display: flex; flex-direction: column; flex: 1; min-width: 0; }
.stage .bar:first-child { height: 28px; }
.drawing { display: flex; flex: 1; min-height: 0; }
.edit-tools { display: flex; flex-direction: column; align-items: center; flex: none; width: 28px; overflow: hidden; border-right: 1px solid #ddd; }
.grip-h { flex: none; width: 24px; height: 2px; margin: 2px 0 4px; background: repeating-linear-gradient(90deg, #b4b4bb 0 2px, transparent 2px 4px); }
.edit-tools hr { flex: none; width: 19px; height: 1px; margin: 2px 0; border: 0; background: #888; }
.vt { display: flex; flex-direction: column; align-items: center; flex: none; gap: 2px; padding: 3px 0; line-height: 12px; }
.vt span { width: 12px; }
.vt:disabled { color: #999; }
.long { padding: 5px 0; }
.more { padding-bottom: 1px; }
.more::after { content: ""; border: 3px solid transparent; border-right: 4px solid #111; border-left: 0; }
.canvas { position: relative; flex: 1; min-width: 0; overflow: hidden; background: #000; }
.plan { display: block; width: 100%; height: 100%; fill: none; shape-rendering: crispEdges; }
.plan text { fill: #e2e2e2; font: 18px "Noto Sans", sans-serif; }
.plan .dim { fill: #999; }
.green-line, .bubbles { stroke: #008000; }
.maroon { stroke: #800000; }
.wall-face { stroke: #ff0; stroke-width: 4px; }
.wall-core { stroke: #008000; stroke-width: 2px; }
.slab-edge { stroke: #ff0; stroke-width: 2px; }
.axis { stroke: #f00; }
.cursor { stroke: #ff0; stroke-width: 2px; }
.hint { position: absolute; left: 105px; top: 275px; width: 190px; padding: 3px 4px; border: 1px solid #666; background: #17175c; color: #85858c; line-height: 13px; }
```
